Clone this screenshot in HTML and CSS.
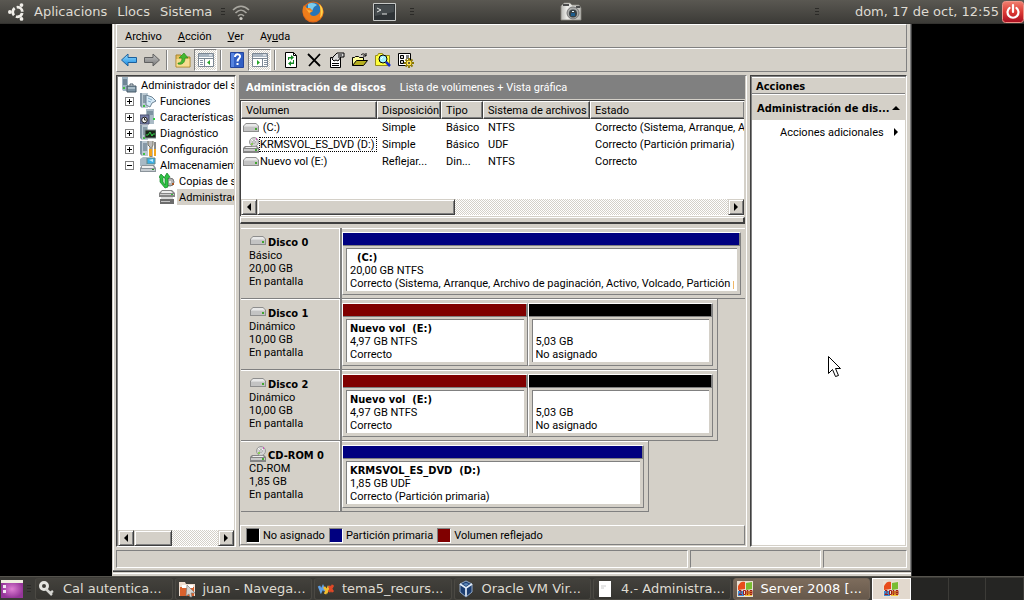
FILE: index.html
```html
<!DOCTYPE html>
<html lang="es">
<head>
<meta charset="utf-8">
<title>Administración de discos</title>
<link rel="stylesheet" href="styles.css">
</head>
<body>
<svg class="defs" aria-hidden="true">
  <defs>
    <linearGradient id="blueArrow" x1="0" y1="0" x2="0" y2="1"><stop offset="0" stop-color="#9be0ff"/><stop offset="1" stop-color="#1487e0"/></linearGradient>
    <linearGradient id="grayArrow" x1="0" y1="0" x2="0" y2="1"><stop offset="0" stop-color="#c4c4c4"/><stop offset="1" stop-color="#777"/></linearGradient>
    <linearGradient id="red" x1="0" y1="0" x2="0" y2="1"><stop offset="0" stop-color="#f08070"/><stop offset=".5" stop-color="#dc3a34"/><stop offset="1" stop-color="#a80d20"/></linearGradient>
    <linearGradient id="cam" x1="0" y1="0" x2="1" y2="0"><stop offset="0" stop-color="#b8b8b4"/><stop offset=".3" stop-color="#eeeeea"/><stop offset="1" stop-color="#bcbcb8"/></linearGradient>
    <radialGradient id="purple"><stop offset="0" stop-color="#df7fd4"/><stop offset="1" stop-color="#96369a"/></radialGradient>
  </defs>
  <symbol id="drive" viewBox="0 0 16 16">
    <path d="M3 3h10l3 3v6H0V6z" fill="#8d8d8d"/><path d="M3 4h10l2 2H1z" fill="#e8e8e8"/><path d="M1 6h14v5H1z" fill="#c3c3c3"/><path d="M1 6h14v1H1z" fill="#d8d8d8"/><path d="M12 8h2v2h-2z" fill="#3fa52e"/>
  </symbol>
  <symbol id="cddrive" viewBox="0 0 16 16">
    <path d="M2 9h12l2 2v5H0v-5z" fill="#858585"/><path d="M3 10h10l1 1H2z" fill="#eee"/><path d="M1 12h14v2H1z" fill="#c9c9c9"/><path d="M12 12h2v2h-2z" fill="#4a3"/>
    <circle cx="11" cy="5" r="4.500" fill="#d4d4d4" stroke="#999"/><path d="M11 5l3-3M11 5L8 2" stroke="#f8f8f8"/><circle cx="11" cy="5" r="1.300" fill="#fff" stroke="#888" stroke-width=".7"/><path d="M13 1h1v2h-1z" fill="#c5b"/><path d="M8 6h2v2H8z" fill="#8c5"/>
  </symbol>
  <symbol id="tower" viewBox="0 0 16 16">
    <path d="M0 0l3-1h5v16H2l-2-2z" fill="#8296a5"/><path d="M2 0h6v15H2z" fill="#bccad3"/><path d="M3 3h4M3 5h4M3 7h4M3 9h4" stroke="#536b7c"/><path d="M3 12h2v2H3z" fill="#3fc044"/>
  </symbol>
  <symbol id="root" viewBox="0 0 16 16">
    <path d="M1 0h6v14H2l-1-2z" fill="#9eb3c2"/><path d="M2 3h4M2 5h4M2 7h4" stroke="#40586b"/><path d="M2 10h2v2H2z" fill="#3fc044"/><path d="M6 9h9v6H6z" fill="#7b93a3" stroke="#475866"/><path d="M9 8.500V7h3v1.500" fill="none" stroke="#475866"/><path d="M7 11h7" stroke="#dce8ee"/>
  </symbol>
  <symbol id="roles" viewBox="0 0 16 16"><use href="#tower"/><path d="M6 2l6 2 4 4-4 2-2 4-4-2z" fill="#d5e9f6" stroke="#6d8394"/><path d="M8 5l4 2M8 8l3 1" stroke="#83abc7"/></symbol>
  <symbol id="features" viewBox="0 0 16 16"><path d="M6 0h8v15H6z" fill="#a9bac5"/><path d="M7 3h6M7 5h6" stroke="#536b7c"/><path d="M13 9h2v2h-2z" fill="#3c4"/><path d="M0 6h9v9H0z" fill="#777faa" stroke="#4b5270"/><circle cx="4.500" cy="11" r="2.800" fill="#f8f8f4" stroke="#222"/><path d="M4.500 9v2h2" stroke="#222" fill="none"/></symbol>
  <symbol id="diagnose" viewBox="0 0 16 16"><use href="#tower"/><path d="M5 5h11v8H5z" fill="#182418" stroke="#788"/><path d="M6 10h2l2-3 2 4 1-2h2" fill="none" stroke="#34d04c"/></symbol>
  <symbol id="config" viewBox="0 0 16 16"><use href="#tower"/><path d="M8 0v4l2 2v10h2V6l1-2V0" fill="#bbb" stroke="#776"/><path d="M9 8h3v7H9zM14 8h2v7h-2z" fill="#f3a51e"/><path d="M15 1v7" stroke="#888" stroke-width="2"/></symbol>
  <symbol id="storage" viewBox="0 0 16 16"><path d="M0 2l3-2h4v9H0z" fill="#a8b9c5"/><path d="M7 1h8v6H7z" fill="#3cb0e5" stroke="#688"/><path d="M9 3l4-1v3z" fill="#c7efff"/><path d="M2 8h12l2 3v4H0v-4z" fill="#8b949b"/><path d="M2 9h11l1 2H2z" fill="#eee"/><path d="M1 12h14v2H1z" fill="#c5cbd0"/><path d="M12 12h2v1h-2z" fill="#292"/></symbol>
  <symbol id="backup" viewBox="0 0 16 16"><circle cx="11" cy="9" r="4" fill="#b4b4b4" stroke="#777"/><circle cx="11" cy="9" r="1" fill="#fff"/><path d="M13 10h2v2h-2z" fill="#a52"/><path d="M0 4l2-3 3 3-1 1v4l2 3V5H5l3-5 3 4-2 1v9l-3 1-5-6V5z" fill="#2fc344" stroke="#138125" stroke-width=".7"/></symbol>
  <symbol id="diskmgmt" viewBox="0 0 16 16"><path d="M3 1h10l3 3v4H0V4z" fill="#858585"/><path d="M3 2h9l2 2H2z" fill="#ececec"/><path d="M1 5h14v1H1z" fill="#ccc"/><path d="M2 8h12v2H2z" fill="#dadada"/><path d="M1 10h14v5H1z" fill="#6c6c6c"/><path d="M2 12h9v1H2z" fill="#c5c5c5"/><path d="M12 5h2v1h-2z" fill="#3b3"/></symbol>
</svg>

<header class="panel">
  <nav class="panel-menu">
    <svg class="ubuntu" viewBox="0 0 18 18" aria-hidden="true"><circle cx="9.500" cy="9" r="4.800" fill="none" stroke="#f0eee9" stroke-width="2.800" stroke-dasharray="7.900 2.153" stroke-dashoffset="-1.100"/><circle cx="1.900" cy="9" r="1.900" fill="#f0eee9"/><circle cx="13.500" cy="2.100" r="1.900" fill="#f0eee9"/><circle cx="13.500" cy="15.900" r="1.900" fill="#f0eee9"/></svg>
    <button>Aplicacions</button><button>Llocs</button><button>Sistema</button>
  </nav>
  <span class="grip"></span>
  <svg class="wifi" viewBox="0 0 16 16" aria-hidden="true"><g fill="none" stroke="#aaa8a1" stroke-width="1.600"><path d="M0 5c5-5 11-5 16 0M2.500 8c4-4 7-4 11 0M5 11c2-2 4-2 6 0"/></g><circle cx="8" cy="13.500" r="1.600" fill="#c9c7c0"/></svg>
  <div class="launch">
    <svg class="firefox" viewBox="0 0 22 22" role="img" aria-label="Firefox"><circle cx="11" cy="11" r="10.500" fill="#df6717"/><circle cx="11" cy="9.500" r="8" fill="#2875b9"/><path d="M6 3c3-2 7-1 9 1l-3 2-2 4-4-2z" fill="#7ccbed"/><path d="M2 4l3 3 3 0 3 3-3 2c0 3 4 4 7 2 4-2 4-7 2-11 5 4 6 10 2 14-5 5-13 4-16-1C0 12 0 8 2 4z" fill="#ee7d1b"/><path d="M17 3c5 4 5 10 1 14 1-4 1-10-1-14z" fill="#ffd54a"/><path d="M3 6l3 3 4 1-3 2z" fill="#ffb33c"/></svg>
    <svg class="terminal" viewBox="0 0 23 18" role="img" aria-label="Terminal"><path d="M.5.500h22v17H.5z" fill="#2e3336" stroke="#c7c9c7"/><path d="M2 2h19v7L2 13z" fill="#454b4e"/><path d="M4 5l4 2-4 2M9 11h5" fill="none" stroke="#e5e7e5"/></svg>
    <span class="grip"></span>
  </div>
  <svg class="camera" viewBox="0 0 22 18" role="img" aria-label="Captura"><path d="M1 3l3-3h6l2 2h7l2 3v12H1z" fill="url(#cam)" stroke="#88867f" stroke-width=".8"/><path d="M3 1h6v2H3zM16 3h4v2h-4z" fill="#4b4c4c"/><circle cx="13" cy="10" r="6" fill="#a9aaa8" stroke="#777"/><circle cx="13" cy="10.500" r="4" fill="#384044"/><path d="M11 10h4v3h-4z" fill="#1c5c8c"/><path d="M12 8h2v1h-2z" fill="#e5f4fa"/></svg>
  <div class="tray">
    <span class="grip"></span>
    <time>dom, 17 de oct, 12:55</time>
    <button class="power" aria-label="Apaga"><svg viewBox="0 0 22 22"><rect x=".5" y=".5" width="21" height="21" rx="3" fill="url(#red)" stroke="#ef9488"/><path d="M7.500 7a5.500 5.500 0 1 0 7 0M11 4v7" fill="none" stroke="#fff" stroke-width="2.200" stroke-linecap="round"/></svg></button>
  </div>
</header>

<div class="desktop">
<main class="window">
  <nav class="menubar">
    <button>Arc<u>h</u>ivo</button><button><u>A</u>cción</button><button><u>V</u>er</button><button>Ay<u>u</u>da</button>
  </nav>
  <div class="toolbar">
    <button aria-label="Atrás"><svg viewBox="0 0 16 16"><path d="M.5 8L7 2v3.500h8.500v5H7V14z" fill="url(#blueArrow)" stroke="#1c5f9c"/></svg></button>
    <button aria-label="Adelante"><svg viewBox="0 0 16 16"><path d="M15.500 8L9 2v3.500H.5v5H9V14z" fill="url(#grayArrow)" stroke="#606060"/></svg></button>
    <i class="sep"></i>
    <button aria-label="Subir"><svg viewBox="0 0 16 16"><path d="M1 3h5l1 2h8v10H1z" fill="#e6bf5c" stroke="#a8842b"/><path d="M1.500 7h13v7.500h-13z" fill="#f7dd91"/><path d="M3 11c3 0 4-2 4-5H4l5-5 4 5h-3c0 5-3 7-7 6z" fill="#45b82f" stroke="#24821a" stroke-width=".6"/></svg></button>
    <button class="on" aria-label="Árbol de consola"><svg viewBox="0 0 16 16"><path d="M.5 1.500h15v13H.5z" fill="#fff" stroke="#7b8794"/><path d="M1 2h14v3H1z" fill="#a9b5c1"/><path d="M11 3h3" stroke="#fff"/><path d="M1 6.500h14M6.500 7v7" stroke="#7b8794"/><path d="M2 8.500h3M2 10.500h3M2 12.500h3" stroke="#8794a0"/><path d="M12 8v5l-3-2.500z" fill="#27a527"/></svg></button>
    <i class="sep"></i>
    <button aria-label="Ayuda"><svg viewBox="0 0 16 16"><path d="M1.500.500h13v15h-13z" fill="#315fc4" stroke="#23449b"/><path d="M2 1h3v14H2z" fill="#5583df"/><path d="M6 5c0-4 6-3 5 0-.5 1.500-2.500 2-2.500 4.500M8.500 11v2" fill="none" stroke="#fff" stroke-width="2"/></svg></button>
    <button class="on" aria-label="Panel de acciones"><svg viewBox="0 0 16 16"><path d="M.5 1.500h15v13H.5z" fill="#fff" stroke="#7b8794"/><path d="M1 2h14v3H1z" fill="#a9b5c1"/><path d="M11 3h3" stroke="#fff"/><path d="M1 6.500h14M10.500 7v7" stroke="#7b8794"/><path d="M12 8.500h3M12 10.500h3M12 12.500h3" stroke="#8794a0"/><path d="M5 8v5l3-2.500z" fill="#27a527"/></svg></button>
    <i class="sep"></i>
    <button aria-label="Actualizar"><svg viewBox="0 0 16 16"><path d="M2.500.500h8l3 3v12h-11z" fill="#fff" stroke="#000"/><path d="M10.500.500v3h3" fill="none" stroke="#000"/><path d="M5 8V5h3V3l3 2.500L8 8V6.500H6V8zM11 8v4H8v2l-3-2.500L8 9v1.500h2V8z" fill="#168a26"/></svg></button>
    <button aria-label="Eliminar"><svg viewBox="0 0 16 16"><path d="M2 2l12 12M14 2L3 14" stroke="#000" stroke-width="1.800" fill="none"/></svg></button>
    <button aria-label="Propiedades"><svg viewBox="0 0 16 16"><path d="M1.500 5.500h10v10h-10z" fill="#fff" stroke="#000"/><path d="M3 11.500h7M3 13.500h7" stroke="#000"/><path d="M4 5l4-4h7v4h-3l-3 4-2-1-2 1-2-2z" fill="#d9d9d9" stroke="#000"/><path d="M9 3h4M9 5h3" stroke="#000"/></svg></button>
    <button aria-label="Abrir"><svg viewBox="0 0 16 16"><path d="M.5 13.500v-8h2l1-1h3l1 1h4v3" fill="#ffff9a" stroke="#000"/><path d="M.5 13.500l4-5h11l-4 5z" fill="#b6af20" stroke="#000"/><path d="M9 3c2-2 4-1 5 1M14 1v3h-3" fill="none" stroke="#000"/></svg></button>
    <button aria-label="Buscar"><svg viewBox="0 0 16 16"><path d="M.5 13.500v-10h2l1-2h4l1 2h6v10z" fill="#ffff3c" stroke="#968a18"/><circle cx="8" cy="7" r="4" fill="#a4f2ff" stroke="#000"/><path d="M6 7l2-2" stroke="#fff"/><path d="M11 10l4 4" stroke="#152bc8" stroke-width="2.500"/></svg></button>
    <button aria-label="Configuración"><svg viewBox="0 0 16 16"><path d="M.5 1.500h12v12H.5z" fill="#fff" stroke="#000"/><path d="M2.500 3.500h3v3h-3zM2.500 8.500h3v3h-3z" fill="#ccc" stroke="#000"/><path d="M8 4h3M8 6h3" stroke="#000"/><path d="M11 6v10M6 11h10M7.500 7.500l7 7M14.500 7.500l-7 7" stroke="#8a7800" stroke-width="1.800"/><circle cx="11" cy="11" r="3" fill="#ffe34b" stroke="#8d7910"/><circle cx="11" cy="11" r="1" fill="#333"/></svg></button>
  </div>

  <div class="panes">
    <aside class="tree-pane">
      <ul class="tree">
        <li class="lv0"><svg><use href="#root"/></svg><span>Administrador del se</span></li>
        <li class="lv1"><button class="exp plus" aria-label="Expandir"></button><svg><use href="#roles"/></svg><span>Funciones</span></li>
        <li class="lv1"><button class="exp plus" aria-label="Expandir"></button><svg><use href="#features"/></svg><span>Características</span></li>
        <li class="lv1"><button class="exp plus" aria-label="Expandir"></button><svg><use href="#diagnose"/></svg><span>Diagnóstico</span></li>
        <li class="lv1"><button class="exp plus" aria-label="Expandir"></button><svg><use href="#config"/></svg><span>Configuración</span></li>
        <li class="lv1"><button class="exp" aria-label="Contraer"></button><svg><use href="#storage"/></svg><span>Almacenamiento</span></li>
        <li class="lv2"><svg><use href="#backup"/></svg><span>Copias de s</span></li>
        <li class="lv2"><svg><use href="#diskmgmt"/></svg><span class="selected">Administrac</span></li>
      </ul>
      <div class="scroll"><button class="arrow left" aria-label="Izquierda"></button><div class="track"><div class="thumb short"></div></div><button class="arrow right" aria-label="Derecha"></button></div>
    </aside>

    <section class="center">
      <div class="heading"><h1>Administración de discos</h1><span>Lista de volúmenes + Vista gráfica</span></div>
      <div class="list">
        <table>
          <colgroup><col class="c-vol"><col class="c-disp"><col class="c-type"><col class="c-fs"><col></colgroup>
          <thead><tr><th>Volumen</th><th>Disposición</th><th>Tipo</th><th>Sistema de archivos</th><th>Estado</th></tr></thead>
          <tbody>
            <tr><td class="vol"><div><svg><use href="#drive"/></svg><span>&nbsp;(C:)</span></div></td><td>Simple</td><td>Básico</td><td>NTFS</td><td>Correcto (Sistema, Arranque, A</td></tr>
            <tr><td class="vol"><div><svg><use href="#cddrive"/></svg><span class="focus">KRMSVOL_ES_DVD (D:)</span></div></td><td>Simple</td><td>Básico</td><td>UDF</td><td>Correcto (Partición primaria)</td></tr>
            <tr><td class="vol"><div><svg><use href="#drive"/></svg><span>Nuevo vol (E:)</span></div></td><td>Reflejar...</td><td>Din...</td><td>NTFS</td><td>Correcto</td></tr>
          </tbody>
        </table>
        <div class="scroll"><button class="arrow left" aria-label="Izquierda"></button><div class="track"><div class="thumb long"></div></div><button class="arrow right" aria-label="Derecha"></button></div>
      </div>
      <div class="splitter"></div>
      <div class="disks">
        <article class="disk full">
          <div class="label"><h2><svg><use href="#drive"/></svg>Disco 0</h2><p>Básico</p><p>20,00 GB</p><p>En pantalla</p></div>
          <div class="volumes"><div class="volume primary"><div><b>&nbsp;&nbsp;(C:)</b><p>20,00 GB NTFS</p><p>Correcto (Sistema, Arranque, Archivo de paginación, Activo, Volcado, Partición p</p></div></div></div>
        </article>
        <article class="disk dynamic">
          <div class="label"><h2><svg><use href="#drive"/></svg>Disco 1</h2><p>Dinámico</p><p>10,00 GB</p><p>En pantalla</p></div>
          <div class="volumes"><div class="volume mirror"><div><b>Nuevo vol&nbsp; (E:)</b><p>4,97 GB NTFS</p><p>Correcto</p></div></div><div class="volume free"><div><b>&nbsp;</b><p>5,03 GB</p><p>No asignado</p></div></div></div>
        </article>
        <article class="disk dynamic">
          <div class="label"><h2><svg><use href="#drive"/></svg>Disco 2</h2><p>Dinámico</p><p>10,00 GB</p><p>En pantalla</p></div>
          <div class="volumes"><div class="volume mirror"><div><b>Nuevo vol&nbsp; (E:)</b><p>4,97 GB NTFS</p><p>Correcto</p></div></div><div class="volume free"><div><b>&nbsp;</b><p>5,03 GB</p><p>No asignado</p></div></div></div>
        </article>
        <article class="disk optical">
          <div class="label"><h2><svg><use href="#cddrive"/></svg>CD-ROM 0</h2><p>CD-ROM</p><p>1,85 GB</p><p>En pantalla</p></div>
          <div class="volumes"><div class="volume primary"><div><b>KRMSVOL_ES_DVD&nbsp; (D:)</b><p>1,85 GB UDF</p><p>Correcto (Partición primaria)</p></div></div></div>
        </article>
      </div>
      <div class="legend"><span class="k-free">No asignado</span><span class="k-primary">Partición primaria</span><span class="k-mirror">Volumen reflejado</span></div>
    </section>

    <aside class="actions">
      <h2>Acciones</h2>
      <button class="group"><span>Administración de dis...</span><svg viewBox="0 0 8 8"><path d="M0 6l4-4 4 4z"/></svg></button>
      <button class="item"><span>Acciones adicionales</span><svg viewBox="0 0 8 8"><path d="M2 0l4 4-4 4z"/></svg></button>
    </aside>
  </div>
  <footer class="status"><div></div><div></div><div></div></footer>
</main>
</div>

<footer class="taskbar">
  <button class="show" aria-label="Mostra l'escriptori"><svg viewBox="0 0 22 18"><path d="M0 0h22v18H0z" fill="url(#purple)"/><path d="M0 0h22v3H0z" fill="#f0eee0"/><path d="M2 5h3v3H2zM2 10h3v3H2z" fill="#f4e6f3"/></svg></button>
  <span class="grip"></span>
  <div class="tasks">
    <button><svg viewBox="0 0 16 16"><circle cx="5" cy="5" r="3.500" fill="none" stroke="#e4e4e0" stroke-width="3"/><path d="M7 8l6 6M11 12l3-2" stroke="#d5d5d1" stroke-width="2.500"/></svg><span>Cal autentica...</span></button>
    <button><svg viewBox="0 0 16 16"><path d="M0 1h6l1 2h9v12H0z" fill="#f1ded0"/><path d="M1 6h14v9H1z" fill="#d9612d"/><path d="M3 4h11v3H3z" fill="#fff"/><path d="M8 4l8 8-4 0 1 4-2 0-1-3-3 2z" fill="#d6d3cf" stroke="#777" stroke-width=".6"/></svg><span>juan - Navega...</span></button>
    <button><svg viewBox="0 0 16 16"><g fill="none" stroke-width="2.600"><path d="M1 5l2 5 2-4 2 4" stroke="#60a0e5"/><path d="M6 6l3 4 2-5M9 9l-2 4" stroke="#f1bd31"/><path d="M11 5l4 6M15 4l-4 7" stroke="#df4826"/></g></svg><span>tema5_recurs...</span></button>
    <button><svg viewBox="0 0 16 16"><path d="M8 0l6 3v8l-6 5-6-5V3z" fill="#1c3d70" stroke="#91a9c9"/><path d="M2 3l6 4 6-4M8 7v8" stroke="#e3edf8" stroke-width="1.700" fill="none"/><path d="M5 3l3-1 3 1-3 2z" fill="#5d86b8"/></svg><span>Oracle VM Vir...</span></button>
    <button><svg viewBox="0 0 16 16"><path d="M2 0h12v16H2z" fill="#fff"/><path d="M4 5h5M4 7h3" stroke="#ccc"/></svg><span>4.- Administra...</span></button>
    <button class="active"><svg viewBox="0 0 16 16"><use href="#server"/></svg><span>Server 2008 [...</span></button>
  </div>
  <div class="pager"><button class="current" aria-label="Àrea 1"><svg viewBox="0 0 16 16"><g id="server"><path d="M0 0h16v16H0z" fill="#e9e0d2"/><path d="M1 5c2-4 4-5 7-4v7L1 9z" fill="#e84d1b"/><path d="M9 2l6-1v7l-6 1z" fill="#78bd32"/><path d="M1 10h6v5H1z" fill="#3c8bd1"/><path d="M8 10h7v5H8z" fill="#f6c736"/><path d="M2 9.500h2v2l-2 2h3M6.500 9.500h2v4h-2zM10 9.500h1v4h-1zM13 9.500h2v4h-2zM13 11.500h2" fill="none" stroke="#9e1919"/></g></svg></button><button aria-label="Àrea 2"></button><button aria-label="Àrea 3"></button><button aria-label="Àrea 4"></button></div>
</footer>

<svg class="cursor" viewBox="0 0 13 22" aria-hidden="true"><path d="M.5.500v17l4-4 3 7 3-1-3-7h5z" fill="#fff" stroke="#000"/></svg>
</body>
</html>
```

FILE: styles.css
```css
:root {
  --face: #d4d0c8;
  --shade: #808080;
  --dark: #404040;
  --navy: #000080;
  --maroon: #800000;
}
* { box-sizing: border-box; }
body {
  margin: 0;
  height: 100vh;
  display: flex;
  flex-direction: column;
  overflow: hidden;
  background: #000;
  color: #000;
  font: 11px/13px Roboto, "Liberation Sans", sans-serif;
}
button { font: inherit; color: inherit; background: none; border: 0; padding: 0; margin: 0; }
h1, h2, p, ul { margin: 0; padding: 0; }
h1, h2, b, .actions .group { font: bold 11px/13px "DejaVu Sans Condensed", "DejaVu Sans", sans-serif; }
svg { display: block; flex: none; width: 16px; height: 16px; overflow: visible; }
svg.defs { position: absolute; width: 0; height: 0; }

/* GNOME panels */
.panel, .taskbar {
  flex: none;
  height: 24px;
  display: flex;
  align-items: center;
  font: 13px/22px "DejaVu Sans", sans-serif;
  color: #dfdbd2;
}
.panel { position: relative; background: linear-gradient(#5a5852, #3c3b37); border-bottom: 1px solid #33322f; padding-left: 8px; }
.panel-menu { display: flex; align-items: center; gap: 10px; }
.panel .ubuntu { width: 18px; height: 18px; margin-right: -2px; }
.grip { width: 4px; height: 8px; flex: none; background: repeating-linear-gradient(#2c2b28 0 1px, transparent 1px 3px); }
.panel-menu + .grip { margin-left: 9px; }
.panel .wifi { margin: 2px 0 0 8px; }
.launch { display: flex; align-items: center; margin-left: 53px; }
.launch .firefox { width: 22px; height: 22px; }
.launch .terminal { width: 23px; height: 18px; margin: 0 14px 0 49px; }
.panel .camera { width: 22px; height: 18px; margin-left: 146px; }
.tray { margin-left: auto; display: flex; align-items: center; }
.tray time { margin-left: 36px; margin-right: 3px; }
.power svg { width: 22px; height: 22px; }

/* Console window */
.desktop { flex: 1; min-height: 0; padding: 0 112px; }
.window {
  height: 100%;
  display: flex;
  flex-direction: column;
  background: var(--face);
  border-left: 1px solid var(--face);
  border-right: 1px solid var(--dark);
  box-shadow: inset 1px 0 #fff, inset -1px 0 var(--shade);
  padding: 0 4px 0 3px;
}
.menubar, .toolbar {
  flex: none;
  display: flex;
  align-items: center;
  height: 24px;
  border: 1px solid #fff;
  border-right-color: var(--shade);
  border-bottom-color: var(--shade);
}
.menubar button { padding: 0 8px; }
.toolbar button { width: 23px; height: 22px; display: grid; place-items: center; }
.toolbar .on {
  border: 1px solid var(--shade);
  border-right-color: #fff;
  border-bottom-color: #fff;
  background: repeating-conic-gradient(#fff 0 25%, var(--face) 0 50%) 0 0 / 2px 2px;
}
.sep { width: 2px; height: 20px; margin: 0 3px; border-left: 1px solid var(--shade); border-right: 1px solid #fff; }

.panes { flex: 1; min-height: 0; display: flex; gap: 3px; padding-top: 3px; }
.tree-pane, .actions {
  background: #fff;
  border: 1px solid var(--dark);
  border-right-color: #fff;
  border-bottom-color: #fff;
  box-shadow: inset 1px 1px var(--shade), inset -1px -1px var(--face);
}
.tree-pane { width: 120px; flex: none; display: flex; flex-direction: column; padding: 1px 1px 0; }
.tree { list-style: none; flex: 1; overflow: hidden; }
.tree li { height: 16px; display: flex; align-items: center; white-space: nowrap; }
.tree span { line-height: 15px; padding: 1px 0 0 2px; margin-left: 2px; }
.lv0 { padding-left: 3px; }
.lv1 { padding-left: 7px; }
.lv2 { padding-left: 41px; }
.tree .selected { background: var(--face); flex: 1; }
.exp {
  width: 9px;
  height: 9px;
  flex: none;
  margin-right: 6px;
  border: 1px solid var(--shade);
  background: linear-gradient(#000, #000) center / 5px 1px no-repeat;
}
.plus { background: linear-gradient(#000, #000) center / 5px 1px no-repeat, linear-gradient(#000, #000) center / 1px 5px no-repeat; }

.scroll { flex: none; display: flex; height: 16px; }
.track { flex: 1; background: repeating-conic-gradient(#fff 0 25%, var(--face) 0 50%) 0 0 / 2px 2px; }
.thumb, .arrow {
  height: 16px;
  background: var(--face);
  border: 1px solid var(--face);
  border-right-color: var(--dark);
  border-bottom-color: var(--dark);
  box-shadow: inset 1px 1px #fff, inset -1px -1px var(--shade);
}
.thumb.short { width: 38px; }
.thumb.long { width: 42%; }
.arrow { width: 16px; display: grid; place-items: center; }
.arrow::before { content: ""; border: 4px solid transparent; }
.arrow.left::before { border-left-width: 0; border-right-color: #000; }
.arrow.right::before { border-right-width: 0; border-left-color: #000; }

.center {
  flex: 1;
  min-width: 0;
  display: flex;
  flex-direction: column;
  border: 1px solid var(--shade);
  border-right-color: #fff;
  border-bottom-color: #fff;
}
.heading {
  flex: none;
  height: 23px;
  display: flex;
  align-items: center;
  gap: 14px;
  padding-left: 6px;
  margin-right: 1px;
  background: var(--shade);
  color: #fff;
  white-space: nowrap;
}
.list {
  flex: none;
  height: 116px;
  margin: 1px 1px 0 0;
  padding-bottom: 1px;
  display: flex;
  flex-direction: column;
  justify-content: space-between;
  background: #fff;
  border: 1px solid var(--dark);
  border-right-color: var(--face);
  border-bottom: 0;
}
table { width: 100%; table-layout: fixed; border-collapse: separate; border-spacing: 0; }
.c-vol { width: 136px; }
.c-disp { width: 64px; }
.c-type { width: 42px; }
.c-fs { width: 107px; }
th, td { padding: 0 0 0 5px; text-align: left; font-weight: normal; white-space: nowrap; overflow: hidden; }
th {
  height: 18px;
  background: var(--face);
  border: 1px solid #fff;
  border-right-color: var(--dark);
  border-bottom-color: var(--dark);
  box-shadow: inset -1px -1px var(--shade);
}
th { padding: 1px 0 0 4px; }
th:last-child { border-right: 0; }
td { height: 17px; }
td.vol { padding: 0 0 0 2px; }
.vol div { display: flex; align-items: center; }
.vol span { padding: 1px; }
.vol .focus { outline: 1px dotted #000; outline-offset: -1px; padding-right: 3px; }
.splitter { flex: none; height: 7px; margin: 1px 1px 0 0; border: 1px solid #fff; border-right: 2px solid var(--dark); border-bottom: 2px solid var(--dark); background: var(--face); }

.disks { flex: 1; min-height: 0; padding: 4px 1px 0; }
.disk { height: 71px; display: flex; border: 1px solid var(--shade); border-width: 0 1px 1px 0; box-shadow: inset 0 1px #fff; }
.disk.full { border-right: 0; }
.disk.dynamic { width: 477px; max-width: 100%; }
.disk.optical { width: 408px; max-width: 100%; }
.label { flex: none; width: 99px; padding: 8px 0 0 8px; border-right: 1px solid #fff; white-space: nowrap; }
.label h2 { display: flex; align-items: center; height: 13px; }
.label svg { margin: 0 2px 4px 1px; }
.volumes { flex: 1; min-width: 0; display: flex; padding: 4px 4px 3px 0; border-left: 2px solid var(--shade); }
.volume {
  flex: 1;
  min-width: 0;
  display: flex;
  flex-direction: column;
  border: 1px solid #fff;
  border-right-color: var(--shade);
  border-bottom-color: var(--shade);
}
.volume::before { content: ""; flex: none; height: 12px; border-bottom: 1px solid var(--shade); border-right: 1px solid var(--shade); }
.volume > div {
  flex: 1;
  margin: 2px 3px 3px;
  padding: 2px 3px 0;
  overflow: hidden;
  white-space: nowrap;
  background: #fff;
  border: 1px solid var(--shade);
  border-right: 0;
  border-bottom: 0;
}
.volume b, .volume p { display: block; height: 13px; overflow: hidden; }
.primary::before { background: var(--navy); }
.mirror::before { background: var(--maroon); }
.free::before { background: #000; }

.legend { flex: none; height: 20px; display: flex; align-items: center; gap: 4px; padding-left: 5px; margin: 0 1px 1px 0; border: 1px solid #fff; border-right-color: var(--shade); border-bottom-color: var(--shade); white-space: nowrap; }
.legend span { display: flex; align-items: center; gap: 3px; }
.legend span::before { content: ""; width: 12px; height: 13px; border: 1px solid var(--shade); border-right-color: #fff; border-bottom-color: #fff; }
.legend .k-free::before { background: #000; }
.legend .k-primary::before { background: var(--navy); }
.legend .k-mirror::before { background: var(--maroon); }

.actions { width: 157px; flex: none; display: flex; flex-direction: column; padding: 1px; }
.actions h2 { height: 17px; line-height: 17px; padding-left: 4px; background: var(--face); border-top: 1px solid #fff; border-bottom: 1px solid var(--shade); }
.actions button { display: flex; align-items: center; text-align: left; white-space: nowrap; padding-right: 5px; }
.actions span { flex: 1; min-width: 0; }
.actions button svg { width: 8px; height: 8px; }
.actions .group { height: 26px; background: var(--face); border-top: 1px solid #fff; padding-top: 1px; padding-left: 5px; }
.actions .item { height: 24px; padding-left: 28px; }

.status {
  flex: none;
  height: 29px;
  display: flex;
  gap: 2px;
  padding: 3px 4px 8px 3px;
  margin: 0 -4px 0 -3px;
  box-shadow: inset 0 -2px var(--face), inset 0 -3px #fff, inset 0 -4px var(--face), inset 0 -5px var(--dark), inset 0 -6px var(--shade);
}
.status div { border: 1px solid var(--shade); border-right-color: #fff; border-bottom-color: #fff; }
.status div:nth-child(1) { flex: 1; }
.status div:nth-child(2) { width: 131px; }
.status div:nth-child(3) { width: 84px; }

/* Bottom panel */
.taskbar { background: #3c3b37; border-top: 1px solid #55534d; padding-left: 1px; }
.show svg { width: 22px; height: 18px; }
.taskbar > .grip { margin: 0 4px; }
.tasks { flex: 1; min-width: 0; display: flex; gap: 2px; }
.tasks button { flex: 1 1 0; min-width: 0; height: 22px; display: flex; align-items: center; gap: 8px; padding: 0 3px; border: 1px solid #4b4943; border-top-color: #45433e; border-radius: 3px; background: linear-gradient(#43413c, #353430); white-space: nowrap; overflow: hidden; }
.tasks .active { background: linear-gradient(#7d6c5c, #66584b); color: #fff; border-color: #75675a; }
.pager { flex: none; display: flex; width: 152px; height: 22px; margin-left: 2px; background: #252523; }
.pager button { flex: 1; border-right: 1px solid #3c3b37; display: grid; place-items: center; }
.pager .current { background: #e2d9ce; border: 1px solid #fff; }

.cursor { position: absolute; left: 828px; top: 356px; width: 13px; height: 22px; }
```
